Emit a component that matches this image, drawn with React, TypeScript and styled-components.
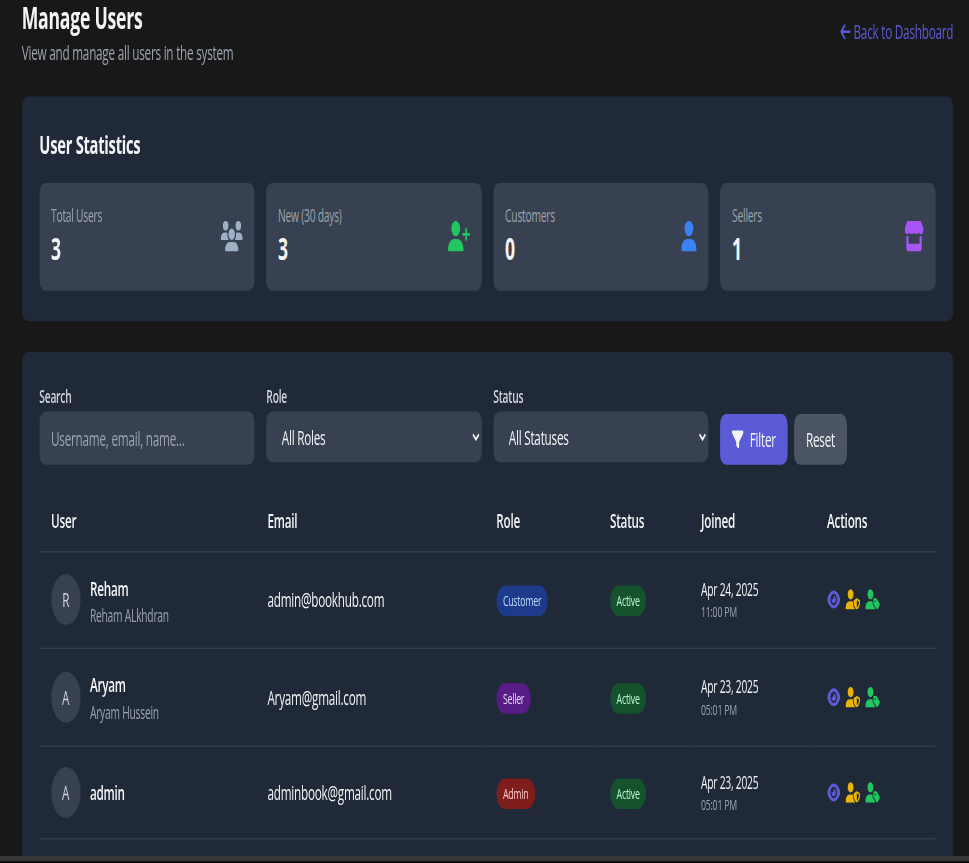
import React from "react";
import styled, { createGlobalStyle } from "styled-components";
import {
  FaArrowLeft, FaEye, FaFilter, FaStore, FaUser, FaUserPlus, FaUserShield, FaUserTag, FaUsers,
} from "react-icons/fa6";

const Global = createGlobalStyle`
  html, body { margin: 0; height: 100%; overflow: hidden; background: #181818; }
  * { box-sizing: border-box; }
  body {
    font-family: "Open Sans", "Noto Sans", "Liberation Sans", sans-serif;
    letter-spacing: -0.02em;
    color: #f3f4f6;
  }
`;

const Viewport = styled.div`
  height: 100vh;
  display: flex;
  flex-direction: column;
`;
const Stage = styled.div`
  flex: 1;
  min-height: 0;
  overflow: hidden;
`;
/* The reference is a screenshot stretched unevenly: every part is squeezed sideways and pulled tall. */
const Stretched = styled.div`
  width: 1321px;
  padding: 0 21px 0 29.6px;
  transform: scale(0.7333, 1.27);
  transform-origin: 0 0;
`;
const WindowEdge = styled.div`
  height: 7px;
  flex: none;
  background: #383838;
  border-bottom: 2px solid #0c0c0c;
`;
const Header = styled.header`
  display: flex;
  justify-content: space-between;
  align-items: center;
  margin-bottom: 23px;
`;
const Title = styled.h1`
  margin: 0 0 1px;
  font-size: 24px;
  line-height: 28px;
  font-weight: 700;
  color: #f3f4f6;
`;
const Subtitle = styled.p`
  margin: 0;
  font-size: 16px;
  line-height: 24px;
  color: #9ca3af;
`;
const BackLink = styled.a`
  display: inline-flex;
  align-items: center;
  gap: 4px;
  margin-top: -4px;
  font-size: 16px;
  line-height: 24px;
  color: #5b5bd6;
  svg { height: 16px; width: 14px; }
`;
const Panel = styled.section`
  background: #1f2937;
  border-radius: 8px;
  padding: 24px;
  margin-bottom: 24px;
`;
const PanelTitle = styled.h2`
  margin: 0 0 15.5px;
  font-size: 20px;
  line-height: 28px;
  font-weight: 700;
  color: #f3f4f6;
`;
const FourColumns = styled.div`
  display: grid;
  grid-template-columns: repeat(4, 1fr);
  gap: 16px;
`;
const StatCard = styled.div`
  background: #374151;
  border-radius: 8px;
  padding: 16px;
  min-height: 85px;
  display: flex;
  justify-content: space-between;
  align-items: center;
`;
const StatLabel = styled.div`
  font-size: 14px;
  line-height: 20px;
  color: #9ca3af;
`;
const StatValue = styled.div`
  font-size: 24px;
  line-height: 32px;
  font-weight: 700;
  color: #f3f4f6;
`;
const StatIcon = styled.span<{ $color: string; $width: number }>`
  display: flex;
  color: ${(p) => p.$color};
  svg { height: 24px; width: ${(p) => p.$width}px; }
`;
const Field = styled.label`
  display: block;
`;
const FieldLabel = styled.span`
  display: block;
  margin: 1px 0 2.2px;
  font-size: 14px;
  line-height: 20px;
  font-weight: 600;
  color: #d1d5db;
`;
const SearchInput = styled.input`
  display: block;
  width: 100%;
  height: 42px;
  padding: 8px 16px;
  background: #374151;
  border: 0;
  border-radius: 8px;
  font: inherit;
  letter-spacing: inherit;
  font-size: 16px;
  color: #f3f4f6;
  &::placeholder { color: #9ca3af; opacity: 1; }
`;
const Select = styled.select`
  display: block;
  width: 100%;
  height: 40px;
  padding: 0 16px 0 17px;
  background: #374151;
  border: 0;
  border-radius: 8px;
  font: inherit;
  letter-spacing: inherit;
  font-size: 16px;
  color: #f3f4f6;
`;
const ButtonRow = styled.div`
  display: flex;
  align-items: flex-end;
  gap: 9px;
`;
const Button = styled.button<{ $primary?: boolean }>`
  display: inline-flex;
  align-items: center;
  gap: 8px;
  height: 40px;
  padding: 0 16px;
  border: 0;
  border-radius: 8px;
  font: inherit;
  letter-spacing: inherit;
  font-size: 16px;
  font-weight: 500;
  color: #f3f4f6;
  background: ${(p) => (p.$primary ? "#5b5bd6" : "#4b5563")};
  svg { height: 16px; width: 16px; }
`;
const Table = styled.table`
  width: 100%;
  margin-top: 24px;
  border-collapse: collapse;
  table-layout: fixed;
`;
const HeadCell = styled.th<{ $width: number }>`
  width: ${(p) => p.$width}px;
  padding: 8px 16px 12px;
  text-align: left;
  font-size: 16px;
  line-height: 24px;
  font-weight: 600;
  color: #f3f4f6;
`;
const HeadRow = styled.tr`
  border-bottom: 1px solid #374151;
`;
const Row = styled.tr`
  border-bottom: 1px solid #374151;
`;
const Cell = styled.td`
  padding: 16px;
  vertical-align: middle;
  font-size: 16px;
  line-height: 24px;
  color: #f3f4f6;
`;
const UserBox = styled.div`
  display: flex;
  align-items: center;
  gap: 13px;
`;
const Avatar = styled.div`
  width: 40px;
  height: 40px;
  flex: none;
  display: flex;
  align-items: center;
  justify-content: center;
  border-radius: 50%;
  background: #374151;
  color: #d1d5db;
`;
const UserName = styled.div`
  font-weight: 600;
`;
const FullName = styled.div`
  font-size: 14px;
  line-height: 19.6px;
  color: #9ca3af;
`;
const Badge = styled.span<{ $bg: string; $fg: string }>`
  display: inline-block;
  padding: 4px 9px;
  border-radius: 12px;
  font-size: 12px;
  line-height: 16px;
  background: ${(p) => p.$bg};
  color: ${(p) => p.$fg};
`;
const DateText = styled.div`
  font-size: 14px;
  line-height: 20px;
`;
const TimeText = styled.div`
  font-size: 12px;
  line-height: 16px;
  color: #9ca3af;
`;
const Actions = styled.div`
  display: flex;
  align-items: center;
  gap: 7px;
`;
const ActionIcon = styled.span<{ $color: string; $width: number }>`
  display: flex;
  color: ${(p) => p.$color};
  svg { height: 16px; width: ${(p) => p.$width}px; }
`;

const stats = [
  { label: "Total Users", value: 3, color: "#9fb0c6", width: 30, icon: <FaUsers /> },
  { label: "New (30 days)", value: 3, color: "#22c55e", width: 30, icon: <FaUserPlus /> },
  { label: "Customers", value: 0, color: "#3b82f6", width: 21, icon: <FaUser /> },
  { label: "Sellers", value: 1, color: "#a855f7", width: 27, icon: <FaStore /> },
];

const columns: [string, number][] = [
  ["User", 295], ["Email", 312], ["Role", 155], ["Status", 124], ["Joined", 172], ["Actions", 164],
];

const roleStyles: Record<string, { bg: string; fg: string }> = {
  Customer: { bg: "#1e3a8a", fg: "#bfdbfe" },
  Seller: { bg: "#581c87", fg: "#e9d5ff" },
  Admin: { bg: "#7f1d1d", fg: "#fecaca" },
};

const users = [
  { initial: "R", name: "Reham", full: "Reham ALkhdran", email: "admin@bookhub.com", role: "Customer", date: "Apr 24, 2025", time: "11:00 PM" },
  { initial: "A", name: "Aryam", full: "Aryam Hussein", email: "Aryam@gmail.com", role: "Seller", date: "Apr 23, 2025", time: "05:01 PM" },
  { initial: "A", name: "admin", full: "", email: "adminbook@gmail.com", role: "Admin", date: "Apr 23, 2025", time: "05:01 PM" },
];

export default function App() {
  return (
    <Viewport>
      <Global />
      <Stage>
        <Stretched>
          <Header>
            <div>
              <Title>Manage Users</Title>
              <Subtitle>View and manage all users in the system</Subtitle>
            </div>
            <BackLink><FaArrowLeft />Back to Dashboard</BackLink>
          </Header>

          <Panel>
            <PanelTitle>User Statistics</PanelTitle>
            <FourColumns>
              {stats.map((s) => (
                <StatCard key={s.label}>
                  <div>
                    <StatLabel>{s.label}</StatLabel>
                    <StatValue>{s.value}</StatValue>
                  </div>
                  <StatIcon $color={s.color} $width={s.width}>{s.icon}</StatIcon>
                </StatCard>
              ))}
            </FourColumns>
          </Panel>

          <Panel>
            <FourColumns>
              <Field>
                <FieldLabel>Search</FieldLabel>
                <SearchInput placeholder="Username, email, name..." />
              </Field>
              <Field>
                <FieldLabel>Role</FieldLabel>
                <Select defaultValue="all"><option value="all">All Roles</option></Select>
              </Field>
              <Field>
                <FieldLabel>Status</FieldLabel>
                <Select defaultValue="all"><option value="all">All Statuses</option></Select>
              </Field>
              <ButtonRow>
                <Button $primary><FaFilter />Filter</Button>
                <Button>Reset</Button>
              </ButtonRow>
            </FourColumns>

            <Table>
              <thead>
                <HeadRow>
                  {columns.map(([label, width]) => (
                    <HeadCell key={label} $width={width}>{label}</HeadCell>
                  ))}
                </HeadRow>
              </thead>
              <tbody>
                {users.map((u) => (
                  <Row key={u.email}>
                    <Cell>
                      <UserBox>
                        <Avatar>{u.initial}</Avatar>
                        <div>
                          <UserName>{u.name}</UserName>
                          {u.full && <FullName>{u.full}</FullName>}
                        </div>
                      </UserBox>
                    </Cell>
                    <Cell>{u.email}</Cell>
                    <Cell>
                      <Badge $bg={roleStyles[u.role].bg} $fg={roleStyles[u.role].fg}>{u.role}</Badge>
                    </Cell>
                    <Cell>
                      <Badge $bg="#14532d" $fg="#bbf7d0">Active</Badge>
                    </Cell>
                    <Cell>
                      <DateText>{u.date}</DateText>
                      <TimeText>{u.time}</TimeText>
                    </Cell>
                    <Cell>
                      <Actions>
                        <ActionIcon $color="#5b5bd6" $width={18}><FaEye /></ActionIcon>
                        <ActionIcon $color="#eab308" $width={20}><FaUserShield /></ActionIcon>
                        <ActionIcon $color="#22c55e" $width={20}><FaUserTag /></ActionIcon>
                      </Actions>
                    </Cell>
                  </Row>
                ))}
              </tbody>
            </Table>
          </Panel>
        </Stretched>
      </Stage>
      <WindowEdge />
    </Viewport>
  );
}
